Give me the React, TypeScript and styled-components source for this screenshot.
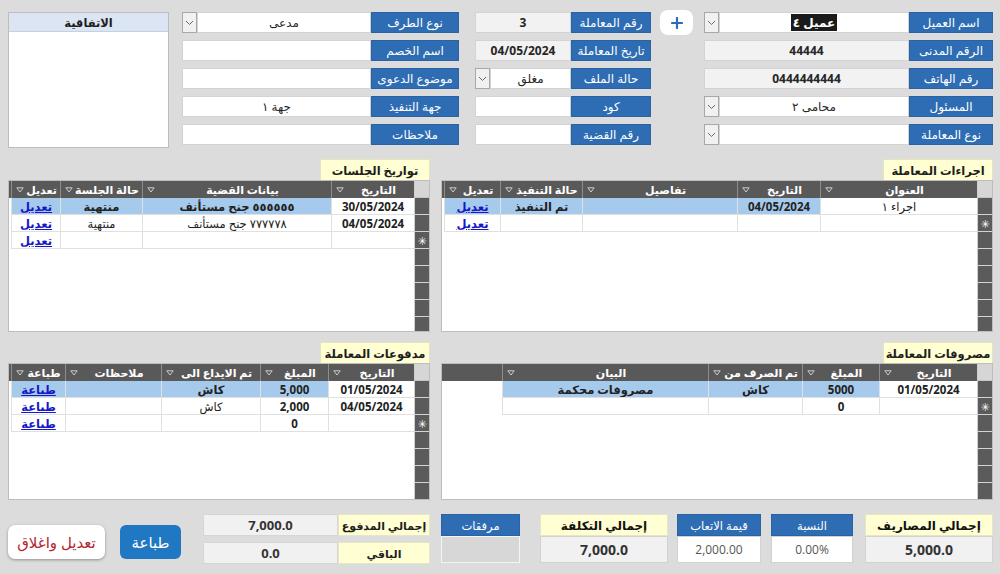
import React from "react";
import styled, { createGlobalStyle } from "styled-components";

const FONT = `"Open Sans", "DejaVu Sans", "Noto Sans", sans-serif`;
const BLUE = "#2e6db3";
const YELLOW = "#ffffd3";

const Global = createGlobalStyle`
  html, body { margin: 0; padding: 0; background: #dcdcdc; }
  body { width: 1000px; height: 574px; overflow: hidden; font-family: ${FONT}; }
  *, *::before, *::after { box-sizing: border-box; }
`;

const Page = styled.div`
  direction: rtl;
  width: 1000px;
  height: 574px;
  padding: 12px 7px 0 8px;
  background: #dcdcdc;
  font-family: ${FONT};
  color: #1e1e1e;
`;

/* ---------- top form ---------- */
const Top = styled.div`
  display: flex;
  align-items: flex-start;
`;

const FieldCol = styled.div<{ $w: number; $space?: number }>`
  width: ${(p) => p.$w}px;
  margin-right: ${(p) => p.$space ?? 0}px;
  display: flex;
  flex-direction: column;
  gap: 7px;
`;

const FieldRow = styled.div`
  display: flex;
  height: 21px;
`;

const Label = styled.div<{ $w: number }>`
  width: ${(p) => p.$w}px;
  flex-shrink: 0;
  background: ${BLUE};
  color: #fff;
  font-size: 12px;
  white-space: nowrap;
  display: flex;
  align-items: center;
  justify-content: center;
  border: 1px solid #2a63a3;
`;

const Field = styled.div<{ $ro?: boolean; $bold?: boolean }>`
  flex: 1;
  background: ${(p) => (p.$ro ? "#f2f2f2" : "#ffffff")};
  border: 1px solid #d3d3d3;
  display: flex;
  align-items: center;
  justify-content: center;
  font-size: 12px;
  font-weight: ${(p) => (p.$bold ? 700 : 400)};
  color: #262626;
  white-space: nowrap;
`;

const DropBtn = styled.div`
  width: 15px;
  flex-shrink: 0;
  background: #f1f1f1;
  border: 1px solid #a8a8a8;
  display: flex;
  align-items: center;
  justify-content: center;
`;

const Highlight = styled.span`
  background: #1b1b1b;
  color: #fff;
  padding: 0 2px;
  font-weight: 700;
`;

const PlusButton = styled.div`
  width: 33px;
  height: 25px;
  margin-right: 11px;
  margin-top: -2px;
  background: #fff;
  border-radius: 8px;
  display: flex;
  align-items: center;
  justify-content: center;
`;

const Agreement = styled.div`
  width: 161px;
  height: 136px;
  margin-right: 13px;
  background: #fff;
  border: 1px solid #bdbdbd;
`;

const AgreementHead = styled.div`
  height: 19px;
  background: #dbe5f3;
  border-bottom: 1px solid #c6d1e0;
  font-size: 11.5px;
  font-weight: 700;
  display: flex;
  align-items: center;
  justify-content: center;
`;

/* ---------- lower area ---------- */
const Lower = styled.div`
  margin-top: 11px;
  display: grid;
  grid-template-columns: 552px 422px;
  grid-template-rows: 173px 158px 49px;
  column-gap: 11px;
  row-gap: 10px;
`;

const Sub = styled.div`
  display: flex;
  flex-direction: column;
  min-height: 0;
`;

const SubTitle = styled.div`
  align-self: flex-start;
  width: 110px;
  height: 21px;
  flex-shrink: 0;
  background: ${YELLOW};
  border: 1px solid #e4e4bd;
  border-bottom: none;
  font-size: 11.5px;
  font-weight: 700;
  white-space: nowrap;
  display: flex;
  align-items: center;
  justify-content: center;
`;

const Sheet = styled.div`
  flex: 1;
  min-height: 0;
  display: flex;
  background: #fff;
  border: 1px solid #bdbdbd;
  overflow: hidden;
`;

const SelectorCol = styled.div`
  width: 15px;
  flex-shrink: 0;
  display: flex;
  flex-direction: column;
  border-left: 1px solid #cfcfcf;
  overflow: hidden;
`;

const SelectorCorner = styled.div`
  height: 17px;
  flex-shrink: 0;
  background: #d6d6d6;
  border-bottom: 1px solid #c4c4c4;
`;

const SelectorCell = styled.div`
  height: 17px;
  flex-shrink: 0;
  background: #5b5b5b;
  border-bottom: 1px solid #d4d4d4;
  color: #fff;
  font-size: 11px;
  display: flex;
  align-items: center;
  justify-content: center;
`;

const DataArea = styled.div`
  flex: 1;
  min-width: 0;
  display: flex;
  flex-direction: column;
`;

const HeadRow = styled.div`
  height: 17px;
  flex-shrink: 0;
  display: flex;
  background: #595959;
`;

const HeadCell = styled.div<{ $w: number }>`
  width: ${(p) => p.$w}px;
  flex-shrink: 0;
  display: flex;
  align-items: center;
  gap: 2px;
  padding: 0 3px 0 4px;
  border-left: 1px solid #8d8d8d;
  color: #fff;
  font-size: 11px;
  font-weight: 700;
  white-space: nowrap;
  overflow: hidden;
`;

const HeadText = styled.span`
  flex: 1;
  text-align: center;
`;

const BodyRow = styled.div`
  height: 17px;
  flex-shrink: 0;
  display: flex;
`;

const BodyCell = styled.div<{ $w: number; $sel?: boolean; $bold?: boolean }>`
  width: ${(p) => p.$w}px;
  flex-shrink: 0;
  background: ${(p) => (p.$sel ? "#a6caec" : "#ffffff")};
  border-left: 1px solid #e0e0e0;
  border-bottom: 1px solid #e0e0e0;
  display: flex;
  align-items: center;
  justify-content: center;
  font-size: 11.5px;
  font-weight: ${(p) => (p.$bold ? 700 : 400)};
  color: #222;
  white-space: nowrap;
  overflow: hidden;
`;

const Link = styled.span`
  color: #1717c6;
  text-decoration: underline;
  font-weight: 700;
`;

/* ---------- totals ---------- */
const TotalsRight = styled.div`
  display: flex;
  align-items: flex-start;
  margin-top: 4px;
`;

const Tile = styled.div<{ $w: number; $space?: number }>`
  width: ${(p) => p.$w}px;
  margin-left: ${(p) => p.$space ?? 0}px;
  display: flex;
  flex-direction: column;
`;

const TileHead = styled.div<{ $tone: "blue" | "yellow" }>`
  height: 22px;
  background: ${(p) => (p.$tone === "blue" ? BLUE : YELLOW)};
  color: ${(p) => (p.$tone === "blue" ? "#fff" : "#111")};
  font-size: ${(p) => (p.$tone === "blue" ? 11.5 : 12)}px;
  font-weight: ${(p) => (p.$tone === "blue" ? 400 : 700)};
  border: 1px solid ${(p) => (p.$tone === "blue" ? "#2a63a3" : "#e6e6c2")};
  white-space: nowrap;
  display: flex;
  align-items: center;
  justify-content: center;
`;

const TileBody = styled.div<{ $kind: "gray" | "white" | "empty" }>`
  height: 27px;
  background: ${(p) =>
    p.$kind === "gray" ? "#f1f1f1" : p.$kind === "white" ? "#ffffff" : "#d7d7d7"};
  border: 1px solid ${(p) => (p.$kind === "empty" ? "#f4f4f4" : "#d2d2d2")};
  display: flex;
  align-items: center;
  justify-content: center;
  font-size: ${(p) => (p.$kind === "gray" ? 14 : 12)}px;
  font-weight: ${(p) => (p.$kind === "gray" ? 700 : 400)};
  color: ${(p) => (p.$kind === "gray" ? "#333" : "#555")};
`;

const TotalsLeft = styled.div`
  display: flex;
  align-items: flex-end;
  margin-top: 4px;
`;

const PayBlock = styled.div`
  width: 227px;
  margin-left: 22px;
  align-self: flex-start;
  display: flex;
  flex-direction: column;
  gap: 6px;
`;

const PayRow = styled.div`
  display: flex;
  height: 22px;
`;

const PayLabel = styled.div`
  width: 92px;
  flex-shrink: 0;
  background: ${YELLOW};
  border: 1px solid #e6e6c2;
  font-size: 11px;
  font-weight: 700;
  white-space: nowrap;
  display: flex;
  align-items: center;
  justify-content: center;
`;

const PayValue = styled.div`
  flex: 1;
  background: #f1f1f1;
  border: 1px solid #d6d6d6;
  font-size: 13px;
  font-weight: 700;
  color: #333;
  display: flex;
  align-items: center;
  justify-content: center;
`;

const PrintButton = styled.div`
  width: 61px;
  height: 34px;
  margin-left: 15px;
  background: #1f78c1;
  border-radius: 6px;
  color: #fff;
  font-size: 15px;
  display: flex;
  align-items: center;
  justify-content: center;
`;

const CloseButton = styled.div`
  width: 97px;
  height: 34px;
  background: #fff;
  border-radius: 7px;
  box-shadow: 0 1px 3px rgba(0, 0, 0, 0.35);
  color: #b5232b;
  font-size: 15px;
  white-space: nowrap;
  display: flex;
  align-items: center;
  justify-content: center;
`;

/* ---------- icons ---------- */
const Chevron = () => (
  <svg width="9" height="6" viewBox="0 0 9 6">
    <path d="M1 1 L4.5 4.5 L8 1" fill="none" stroke="#6a6a6a" strokeWidth="1" />
  </svg>
);

const HeadArrow = () => (
  <svg width="8" height="6" viewBox="0 0 8 6" style={{ flexShrink: 0 }}>
    <path d="M0.8 0.8 H7.2 L4 5 Z" fill="none" stroke="#d8d8d8" strokeWidth="0.9" />
  </svg>
);

const PlusIcon = () => (
  <svg width="12" height="12" viewBox="0 0 12 12">
    <path d="M6 1 V11 M1 6 H11" stroke={BLUE} strokeWidth="2.2" strokeLinecap="round" />
  </svg>
);

/* ---------- data ---------- */
type Col = { label: string; w: number };
type Cell = { t?: string; b?: boolean; link?: string };
type Row = { sel?: boolean; cells: Cell[] };
type GridDef = { title: string; cols: Col[]; rows: Row[]; star: number };

const gridA: GridDef = {
  title: "اجراءات المعاملة",
  cols: [
    { label: "العنوان", w: 157 },
    { label: "التاريخ", w: 83 },
    { label: "تفاصيل", w: 155 },
    { label: "حالة التنفيذ", w: 82 },
    { label: "تعديل", w: 56 },
  ],
  rows: [
    {
      sel: true,
      cells: [{ t: "اجراء ١" }, { t: "04/05/2024", b: true }, {}, { t: "تم التنفيذ", b: true }, { link: "تعديل" }],
    },
    { cells: [{}, {}, {}, {}, { link: "تعديل" }] },
  ],
  star: 1,
};

const gridB: GridDef = {
  title: "تواريخ الجلسات",
  cols: [
    { label: "التاريخ", w: 83 },
    { label: "بيانات القضية", w: 189 },
    { label: "حالة الجلسة", w: 82 },
    { label: "تعديل", w: 49 },
  ],
  rows: [
    {
      sel: true,
      cells: [
        { t: "30/05/2024", b: true },
        { t: "٥٥٥٥٥٥ جنح مستأنف", b: true },
        { t: "منتهية", b: true },
        { link: "تعديل" },
      ],
    },
    {
      cells: [{ t: "04/05/2024", b: true }, { t: "٧٧٧٧٧٨ جنح مستأنف" }, { t: "منتهية" }, { link: "تعديل" }],
    },
    { cells: [{}, {}, {}, { link: "تعديل" }] },
  ],
  star: 2,
};

const gridC: GridDef = {
  title: "مصروفات المعاملة",
  cols: [
    { label: "التاريخ", w: 98 },
    { label: "المبلغ", w: 77 },
    { label: "تم الصرف من", w: 94 },
    { label: "البيان", w: 206 },
  ],
  rows: [
    {
      sel: true,
      cells: [
        { t: "01/05/2024", b: true },
        { t: "5000", b: true },
        { t: "كاش", b: true },
        { t: "مصروفات محكمة", b: true },
      ],
    },
    { cells: [{}, { t: "0", b: true }, {}, {}] },
  ],
  star: 1,
};

const gridD: GridDef = {
  title: "مدفوعات المعاملة",
  cols: [
    { label: "التاريخ", w: 86 },
    { label: "المبلغ", w: 68 },
    { label: "تم الايداع الى", w: 99 },
    { label: "ملاحظات", w: 96 },
    { label: "طباعة", w: 54 },
  ],
  rows: [
    {
      sel: true,
      cells: [{ t: "01/05/2024", b: true }, { t: "5,000", b: true }, { t: "كاش", b: true }, {}, { link: "طباعة" }],
    },
    {
      cells: [{ t: "04/05/2024", b: true }, { t: "2,000", b: true }, { t: "كاش" }, {}, { link: "طباعة" }],
    },
    { cells: [{}, { t: "0", b: true }, {}, {}, { link: "طباعة" }] },
  ],
  star: 2,
};

const Subform = ({ def }: { def: GridDef }) => {
  const selectorCount = 10;
  return (
    <Sub>
      <SubTitle>{def.title}</SubTitle>
      <Sheet>
        <SelectorCol>
          <SelectorCorner />
          {Array.from({ length: selectorCount }).map((_, i) => (
            <SelectorCell key={i}>{i === def.star ? "✳" : ""}</SelectorCell>
          ))}
        </SelectorCol>
        <DataArea>
          <HeadRow>
            {def.cols.map((c) => (
              <HeadCell key={c.label} $w={c.w}>
                <HeadText>{c.label}</HeadText>
                <HeadArrow />
              </HeadCell>
            ))}
          </HeadRow>
          {def.rows.map((r, ri) => (
            <BodyRow key={ri}>
              {def.cols.map((c, ci) => {
                const cell = r.cells[ci] || {};
                return (
                  <BodyCell key={ci} $w={c.w} $sel={!!r.sel && ci > 0} $bold={cell.b}>
                    {cell.link ? <Link>{cell.link}</Link> : cell.t}
                  </BodyCell>
                );
              })}
            </BodyRow>
          ))}
        </DataArea>
      </Sheet>
    </Sub>
  );
};

export default function App() {
  return (
    <>
      <Global />
      <Page>
        <Top>
          <FieldCol $w={289}>
            <FieldRow>
              <Label $w={84}>اسم العميل</Label>
              <Field>
                <Highlight>عميل ٤</Highlight>
              </Field>
              <DropBtn>
                <Chevron />
              </DropBtn>
            </FieldRow>
            <FieldRow>
              <Label $w={84}>الرقم المدنى</Label>
              <Field $ro $bold>
                44444
              </Field>
            </FieldRow>
            <FieldRow>
              <Label $w={84}>رقم الهاتف</Label>
              <Field $ro $bold>
                0444444444
              </Field>
            </FieldRow>
            <FieldRow>
              <Label $w={84}>المسئول</Label>
              <Field>محامى ٢</Field>
              <DropBtn>
                <Chevron />
              </DropBtn>
            </FieldRow>
            <FieldRow>
              <Label $w={84}>نوع المعاملة</Label>
              <Field />
              <DropBtn>
                <Chevron />
              </DropBtn>
            </FieldRow>
          </FieldCol>

          <PlusButton>
            <PlusIcon />
          </PlusButton>

          <FieldCol $w={176} $space={9}>
            <FieldRow>
              <Label $w={80}>رقم المعاملة</Label>
              <Field $ro $bold>
                3
              </Field>
            </FieldRow>
            <FieldRow>
              <Label $w={80}>تاريخ المعاملة</Label>
              <Field $ro $bold>
                04/05/2024
              </Field>
            </FieldRow>
            <FieldRow>
              <Label $w={80}>حالة الملف</Label>
              <Field>مغلق</Field>
              <DropBtn>
                <Chevron />
              </DropBtn>
            </FieldRow>
            <FieldRow>
              <Label $w={80}>كود</Label>
              <Field />
            </FieldRow>
            <FieldRow>
              <Label $w={80}>رقم القضية</Label>
              <Field />
            </FieldRow>
          </FieldCol>

          <FieldCol $w={277} $space={16}>
            <FieldRow>
              <Label $w={88}>نوع الطرف</Label>
              <Field>مدعى</Field>
              <DropBtn>
                <Chevron />
              </DropBtn>
            </FieldRow>
            <FieldRow>
              <Label $w={88}>اسم الخصم</Label>
              <Field />
            </FieldRow>
            <FieldRow>
              <Label $w={88}>موضوع الدعوى</Label>
              <Field />
            </FieldRow>
            <FieldRow>
              <Label $w={88}>جهة التنفيذ</Label>
              <Field>جهة ١</Field>
            </FieldRow>
            <FieldRow>
              <Label $w={88}>ملاحظات</Label>
              <Field />
            </FieldRow>
          </FieldCol>

          <Agreement>
            <AgreementHead>الاتفاقية</AgreementHead>
          </Agreement>
        </Top>

        <Lower>
          <Subform def={gridA} />
          <Subform def={gridB} />
          <Subform def={gridC} />
          <Subform def={gridD} />

          <TotalsRight>
            <Tile $w={128} $space={12}>
              <TileHead $tone="yellow">إجمالي المصاريف</TileHead>
              <TileBody $kind="gray">5,000.0</TileBody>
            </Tile>
            <Tile $w={82} $space={10}>
              <TileHead $tone="blue">النسبة</TileHead>
              <TileBody $kind="white">0.00%</TileBody>
            </Tile>
            <Tile $w={84} $space={9}>
              <TileHead $tone="blue">قيمة الاتعاب</TileHead>
              <TileBody $kind="white">2,000.00</TileBody>
            </Tile>
            <Tile $w={128} $space={20}>
              <TileHead $tone="yellow">إجمالي التكلفة</TileHead>
              <TileBody $kind="gray">7,000.0</TileBody>
            </Tile>
            <Tile $w={79}>
              <TileHead $tone="blue">مرفقات</TileHead>
              <TileBody $kind="empty" />
            </Tile>
          </TotalsRight>

          <TotalsLeft>
            <PayBlock>
              <PayRow>
                <PayLabel>إجمالي المدفوع</PayLabel>
                <PayValue>7,000.0</PayValue>
              </PayRow>
              <PayRow>
                <PayLabel>الباقي</PayLabel>
                <PayValue>0.0</PayValue>
              </PayRow>
            </PayBlock>
            <PrintButton>طباعة</PrintButton>
            <CloseButton>تعديل واغلاق</CloseButton>
          </TotalsLeft>
        </Lower>
      </Page>
    </>
  );
}
